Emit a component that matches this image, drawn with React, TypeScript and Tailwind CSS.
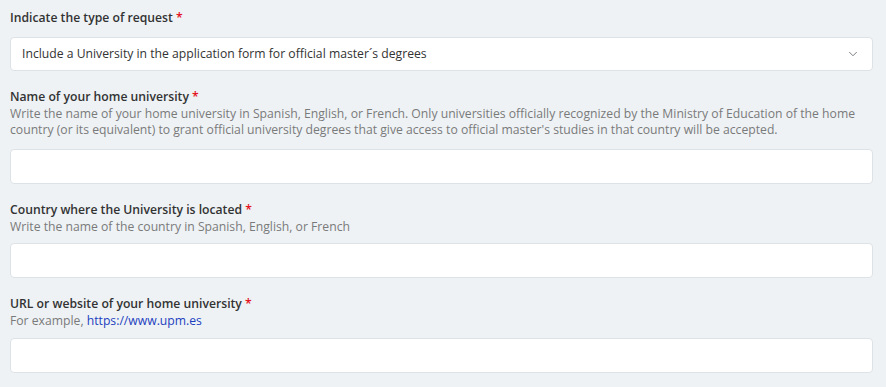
import { ChevronDown } from "lucide-react";

function Label({ text }: { text: string }) {
  return (
    <div className="text-[12.2px] font-semibold leading-[18px] text-[#333333]">
      {text} <span className="text-[#e5131d]">*</span>
    </div>
  );
}

function TextBox() {
  return <div className="h-[35px] rounded-[4px] border border-[#dde2e6] bg-white" />;
}

export default function App() {
  return (
    <div className="min-h-[387px] bg-[#eef2f5] pl-[10px] pr-[13px] pt-[9px] font-['Open_Sans',sans-serif]">
      <Label text="Indicate the type of request" />
      <div className="mt-[10px] flex h-[34px] items-center justify-between rounded-[4px] border border-[#dde2e6] bg-white pl-[11px] pr-[12px] text-[12.2px] text-[#333333]">
        <span>Include a University in the application form for official master´s degrees</span>
        <ChevronDown size={14} strokeWidth={1.5} className="text-[#666b70]" />
      </div>

      <div className="mt-[17px]">
        <Label text="Name of your home university" />
        <p className="text-[12.2px] leading-[16px] text-[#7a7a7a]">
          Write the name of your home university in Spanish, English, or French. Only universities officially recognized by the Ministry of Education of the home country (or its equivalent) to grant official university degrees that give access to official master's studies in that country will be accepted.
        </p>
        <div className="mt-[11px]">
          <TextBox />
        </div>
      </div>

      <div className="mt-[17px]">
        <Label text="Country where the University is located" />
        <p className="text-[12.2px] leading-[16px] text-[#7a7a7a]">
          Write the name of the country in Spanish, English, or French
        </p>
        <div className="mt-[8px]">
          <TextBox />
        </div>
      </div>

      <div className="mt-[17px]">
        <Label text="URL or website of your home university" />
        <p className="text-[12.2px] leading-[16px] text-[#7a7a7a]">
          For example, <a className="text-[#1d3fbf]">https://www.upm.es</a>
        </p>
        <div className="mt-[9px]">
          <TextBox />
        </div>
      </div>
    </div>
  );
}
